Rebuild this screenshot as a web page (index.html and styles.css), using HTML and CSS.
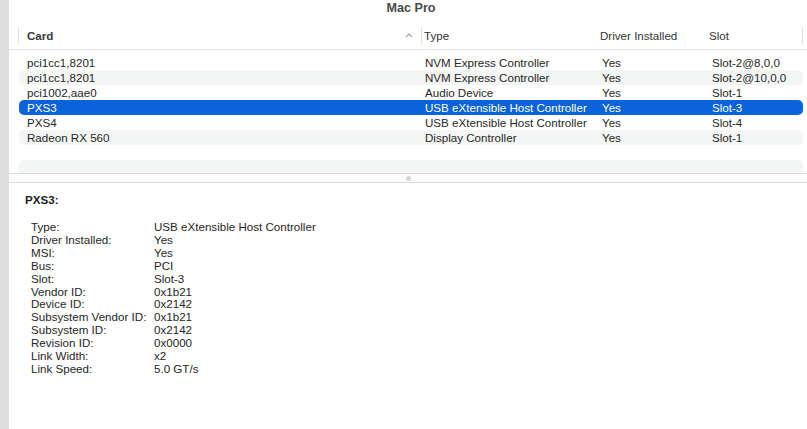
FILE: index.html
```html
<!DOCTYPE html>
<html>
<head>
<meta charset="utf-8">
<link rel="stylesheet" href="styles.css">
</head>
<body>
<div class="window">
  <div class="strip"></div>
  <div class="main">
    <div class="title">Mac Pro</div>
    <div class="header">
      <div class="sep"></div>
      <div class="hcell hcard"><span class="sorted">Card</span>
        <svg class="arrow" width="8" height="5" viewBox="0 0 8 5"><path d="M0.8 4.2 L4 1 L7.2 4.2" fill="none" stroke="#a0a0a0" stroke-width="1.1"/></svg>
      </div>
      <div class="sep"></div>
      <div class="hcell htype">Type</div>
      <div class="hcell hdrv">Driver Installed</div>
      <div class="hcell hslot">Slot</div>
      <div class="sep"></div>
    </div>
    <div class="list">
      <div class="row"><span class="c1">pci1cc1,8201</span><span class="c2">NVM Express Controller</span><span class="c3">Yes</span><span class="c4">Slot-2@8,0,0</span></div>
      <div class="row alt"><span class="c1">pci1cc1,8201</span><span class="c2">NVM Express Controller</span><span class="c3">Yes</span><span class="c4">Slot-2@10,0,0</span></div>
      <div class="row"><span class="c1">pci1002,aae0</span><span class="c2">Audio Device</span><span class="c3">Yes</span><span class="c4">Slot-1</span></div>
      <div class="row sel"><span class="c1">PXS3</span><span class="c2">USB eXtensible Host Controller</span><span class="c3">Yes</span><span class="c4">Slot-3</span></div>
      <div class="row"><span class="c1">PXS4</span><span class="c2">USB eXtensible Host Controller</span><span class="c3">Yes</span><span class="c4">Slot-4</span></div>
      <div class="row alt"><span class="c1">Radeon RX 560</span><span class="c2">Display Controller</span><span class="c3">Yes</span><span class="c4">Slot-1</span></div>
      <div class="row"></div>
      <div class="row alt"></div>
    </div>
    <div class="splitter"><div class="dot"></div></div>
    <div class="detail">
      <div class="dtitle">PXS3:</div>
      <div class="props">
        <span>Type:</span><span>USB eXtensible Host Controller</span>
        <span>Driver Installed:</span><span>Yes</span>
        <span>MSI:</span><span>Yes</span>
        <span>Bus:</span><span>PCI</span>
        <span>Slot:</span><span>Slot-3</span>
        <span>Vendor ID:</span><span>0x1b21</span>
        <span>Device ID:</span><span>0x2142</span>
        <span>Subsystem Vendor ID:</span><span>0x1b21</span>
        <span>Subsystem ID:</span><span>0x2142</span>
        <span>Revision ID:</span><span>0x0000</span>
        <span>Link Width:</span><span>x2</span>
        <span>Link Speed:</span><span>5.0 GT/s</span>
      </div>
    </div>
  </div>
</div>
</body>
</html>
```
FILE: styles.css
```css
html, body {
  margin: 0;
  padding: 0;
  background: #ffffff;
}
body {
  font-family: "Liberation Sans", Arial, sans-serif;
  font-size: 11.6px;
  color: #262626;
}
.window {
  display: flex;
  width: 807px;
  height: 429px;
  overflow: hidden;
}
.strip {
  width: 9px;
  flex: none;
  background: #dedede;
}
.main {
  flex: 1;
  display: flex;
  flex-direction: column;
  min-width: 0;
}
.title {
  height: 22px;
  line-height: 16px;
  text-align: center;
  font-weight: bold;
  font-size: 12.6px;
  color: #4a4a4a;
  padding-left: 6px;
  box-sizing: border-box;
}
.header {
  height: 28px;
  box-sizing: border-box;
  border-bottom: 1px solid #e2e2e2;
  display: flex;
  align-items: center;
  padding-left: 9px;
  color: #333333;
}
.sep {
  width: 1px;
  height: 17px;
  background: #e0e0e0;
  flex: none;
}
.hcell {
  flex: none;
  box-sizing: border-box;
  white-space: nowrap;
}
.hcard {
  width: 402px;
  padding-left: 8px;
  padding-right: 8px;
  display: flex;
  align-items: center;
  justify-content: space-between;
}
.sorted {
  font-weight: 600;
  color: #3a3a3a;
}
.arrow {
  display: block;
  margin-top: -1px;
}
.htype {
  width: 178px;
  padding-left: 2px;
}
.hdrv {
  width: 109px;
}
.hslot {
  width: 93px;
}
.list {
  height: 123px;
  overflow: hidden;
  padding-top: 5px;
  box-sizing: border-box;
  padding-left: 10px;
  padding-right: 4px;
}
.row {
  height: 15px;
  line-height: 15px;
  border-radius: 5px;
  display: flex;
  padding-left: 8px;
  white-space: nowrap;
}
.c1 { flex: none; width: 398px; }
.c2 { flex: none; width: 177px; }
.c3 { flex: none; width: 110px; }
.c4 { flex: 1; min-width: 0; }
.row.alt {
  background: #f4f5f5;
}
.row.sel {
  background: #0b63dc;
  color: #ffffff;
}
.splitter {
  height: 10px;
  box-sizing: border-box;
  border-top: 1px solid #dadada;
  border-bottom: 1px solid #dadada;
  background: #fcfcfc;
  display: flex;
  align-items: center;
  justify-content: center;
}
.dot {
  width: 5px;
  height: 5px;
  border-radius: 50%;
  background: #d6d6d6;
}
.detail {
  flex: 1;
  padding-left: 16px;
  padding-top: 10px;
}
.dtitle {
  font-weight: bold;
  line-height: 13px;
  color: #1e1e1e;
  margin-bottom: 15px;
}
.props {
  display: grid;
  grid-template-columns: 123px 1fr;
  line-height: 12.9px;
  padding-left: 6px;
}
```
